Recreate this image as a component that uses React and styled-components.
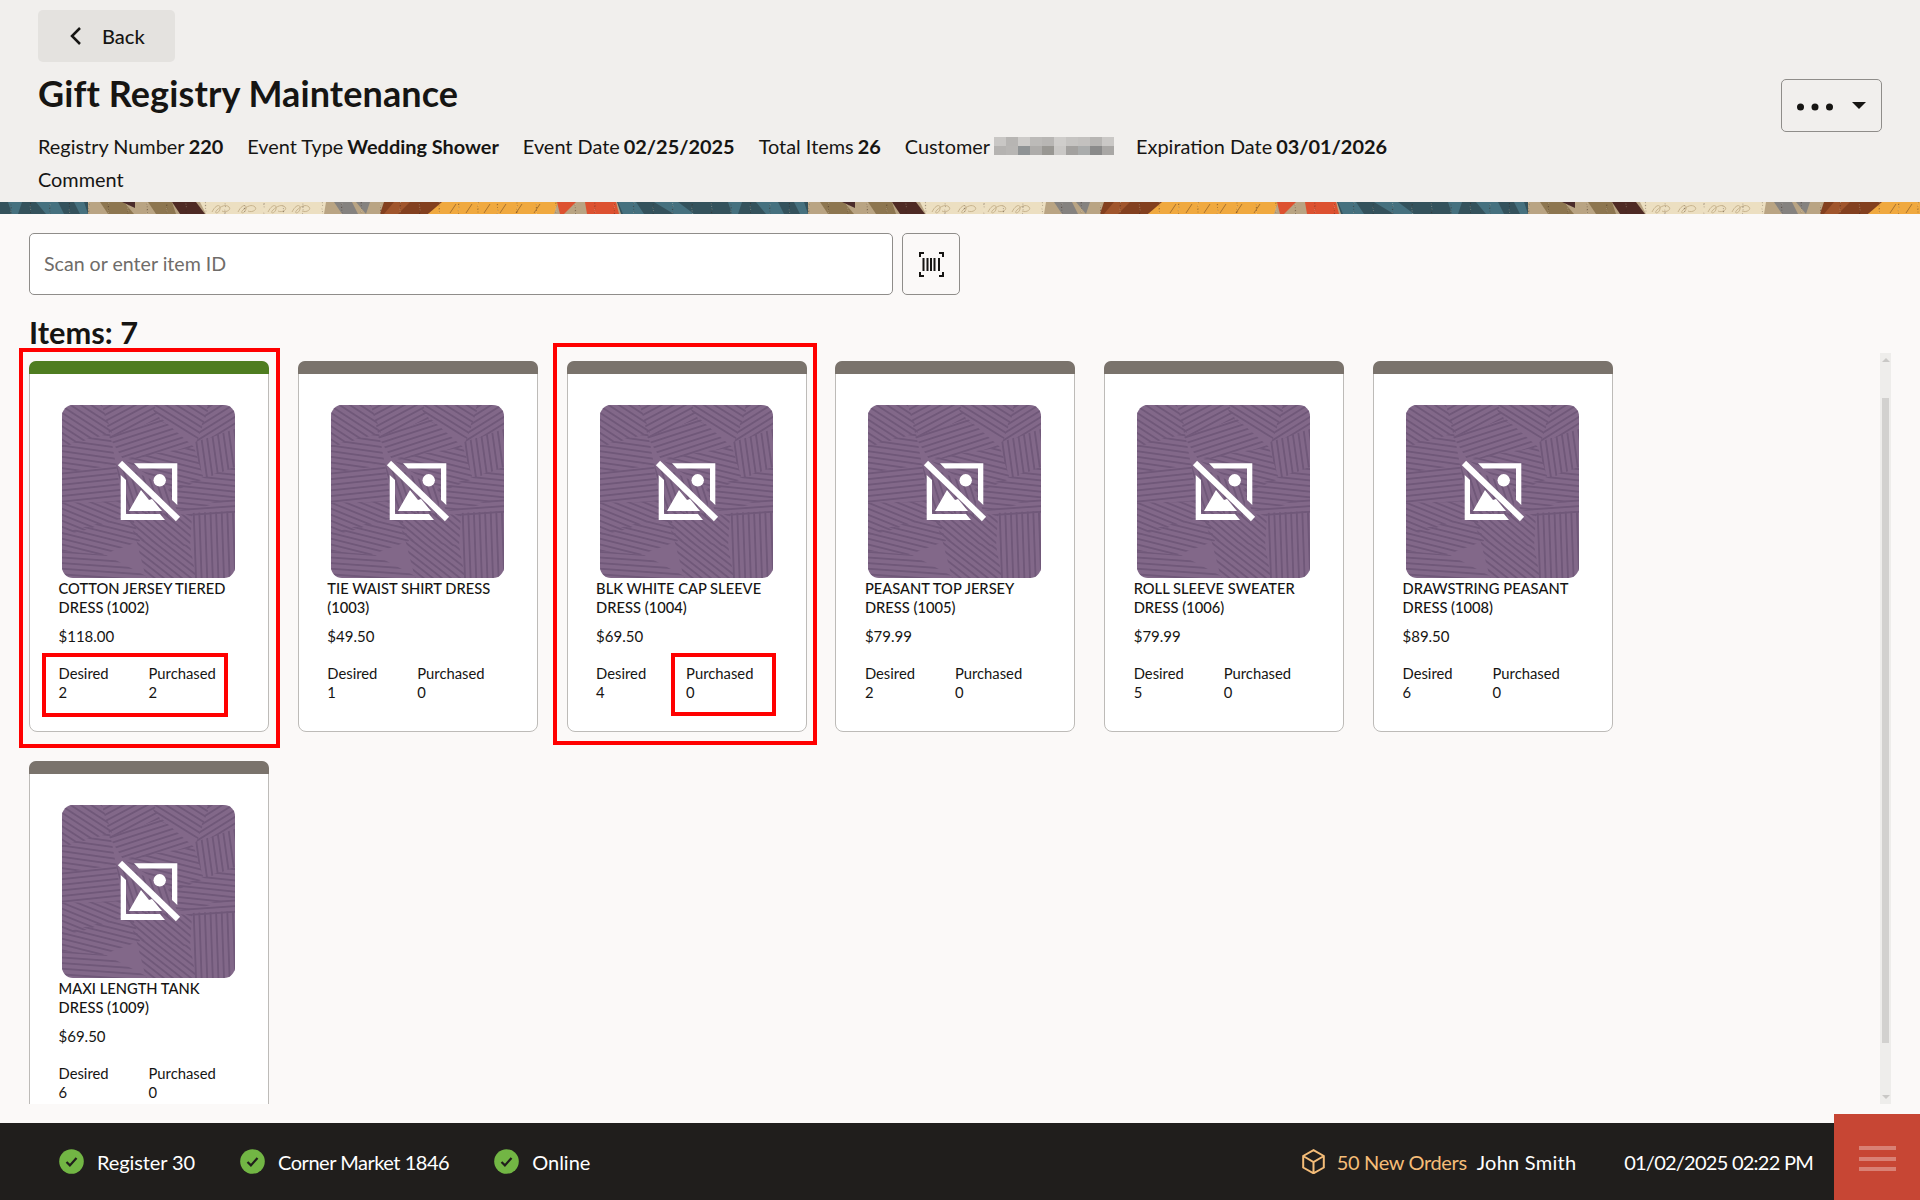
import React, { useId } from "react";
import styled, { createGlobalStyle } from "styled-components";

const Global = createGlobalStyle`
  html, body { margin: 0; padding: 0; height: 100%; overflow: hidden; }
  body { font-family: Lato, "Noto Sans", "Liberation Sans", sans-serif; color: #161513; background: #fbf9f8; }
  * { box-sizing: border-box; }
`;

const Page = styled.div`display:flex;flex-direction:column;height:1200px;width:1920px;overflow:hidden;position:relative;`;
const Header = styled.header`height:202px;background:#f1efed;display:flex;justify-content:space-between;padding:10px 38px 0;flex:none;`;
const HeaderLeft = styled.div`display:flex;flex-direction:column;align-items:flex-start;`;
const BackButton = styled.button`width:137px;height:52px;border:0;border-radius:5px;background:#e4e2df;display:flex;align-items:center;gap:19px;padding:0 0 0 31px;font:500 20px Lato,sans-serif;color:#161513;`;
const Title = styled.h1`margin:9px 0 0 0;font:700 36px/44px Lato,sans-serif;letter-spacing:.1px;color:#161513;`;
const MetaRow = styled.div`display:flex;align-items:center;gap:24px;margin:16.5px 0 0 0;font:400 19.9px/28px Lato,sans-serif;height:28px;`;
const MetaItem = styled.span`white-space:nowrap;display:flex;align-items:center;gap:4px;`;
const Comment = styled.div`font:400 19.9px/28px Lato,sans-serif;margin:5.5px 0 0 0;`;
const OverflowButton = styled.button`width:101px;height:53px;margin:69px 0 0;border:1.5px solid #8f8d8a;border-radius:5px;background:transparent;display:flex;align-items:center;justify-content:center;padding:0 0 0 2px;`;
const Band = styled.svg`display:block;width:100%;height:12px;flex:none;`;
const Main = styled.main`flex:1;min-height:0;display:flex;flex-direction:column;padding:19px 29px 19px;background:#fbf9f8;`;
const SearchRow = styled.div`display:flex;gap:9px;flex:none;`;
const SearchInput = styled.input`width:864px;height:62px;border:1.5px solid #8f8d8a;border-radius:5px;background:#fff;padding:0 14px 2px;font:400 19.6px Lato,sans-serif;color:#161513;&::placeholder{color:#6f6c69;opacity:1;}`;
const ScanButton = styled.button`width:58px;height:62px;border:1.5px solid #8f8d8a;border-radius:5px;background:transparent;display:flex;align-items:center;justify-content:center;padding:0;`;
const ItemsTitle = styled.h2`margin:21px 0 0;font:700 30.8px/34px Lato,sans-serif;height:37px;flex:none;`;
const Body = styled.div`flex:1;min-height:0;display:flex;`;
const Scroller = styled.div`flex:1;min-width:0;clip-path:inset(-20px 0 0 -20px);padding-top:8px;`;
const CardGrid = styled.div`display:grid;grid-template-columns:repeat(6,240px);column-gap:28.8px;row-gap:29px;`;
const Card = styled.article`position:relative;height:371px;background:#fff;border:1.5px solid #bdbbb8;border-radius:8px;display:flex;flex-direction:column;`;
const CardBar = styled.div`height:13px;margin:-1px -1px 0;border-radius:7px 7px 0 0;background:${p => (p.$done ? "#4f7d21" : "#7a736c")};flex:none;`;
const CardBody = styled.div`padding:31px 0 0 28.5px;display:flex;flex-direction:column;`;
const Thumb = styled.svg`display:block;width:173px;height:173px;margin-left:3.5px;border-radius:11px;flex:none;`;
const ItemName = styled.div`font:500 14.7px/19px Lato,sans-serif;color:#161513;margin-top:0.5px;width:178px;`;
const Price = styled.div`font:400 15px/19px Lato,sans-serif;margin-top:10px;`;
const Counts = styled.div`display:flex;margin-top:18.5px;font:400 14.8px/19px Lato,sans-serif;`;
const Count = styled.div`width:90px;`;
const Highlight = styled.div`position:absolute;border:4px solid #ff0000;pointer-events:none;left:${p => p.$l}px;top:${p => p.$t}px;width:${p => p.$w}px;height:${p => p.$h}px;`;
const ScrollTrack = styled.div`width:11px;background:#eeedeb;display:flex;flex-direction:column;align-items:center;justify-content:space-between;padding:5px 0;position:relative;flex:none;margin-left:auto;`;
const ScrollThumb = styled.div`position:absolute;left:2px;top:45px;width:7px;height:645px;background:#d2d1cf;`;
const Arrow = styled.div`width:0;height:0;border-left:4px solid transparent;border-right:4px solid transparent;${p => (p.$down ? "border-top:4px solid #c9c8c6;" : "border-bottom:4px solid #c9c8c6;")}`;
const Footer = styled.footer`height:77px;flex:none;background:#201e1c;color:#fff;display:flex;align-items:center;padding:0 107px 0 59px;font:400 20px Lato,sans-serif;position:relative;`;
const Status = styled.div`display:flex;align-items:center;gap:13px;margin-right:45px;white-space:nowrap;letter-spacing:${p => p.$ls || 0}px;`;
const FooterRight = styled.div`margin-left:auto;display:flex;align-items:center;white-space:nowrap;`;
const Orders = styled.span`color:#f5bd78;margin:0 10px 0 12px;letter-spacing:-.35px;`;
const User = styled.span`margin-right:47.8px;letter-spacing:.25px;`;
const Clock = styled.span`letter-spacing:-.75px;`;
const MenuButton = styled.button`position:absolute;right:0;bottom:0;width:86px;height:86px;border:0;background:#c74634;display:flex;flex-direction:column;align-items:center;justify-content:flex-start;gap:6.5px;padding:32px 0 0;`;
const MenuLine = styled.span`display:block;width:37px;height:4px;background:rgba(255,255,255,.32);`;
const MosaicSvg = styled.svg`display:block;margin-right:-2px;`;

const items = [
  { name: "COTTON JERSEY TIERED DRESS (1002)", price: "$118.00", d: 2, p: 2, done: true,
    hl: [{ l: -11, t: -14, w: 261, h: 400 }, { l: 12, t: 291, w: 186, h: 64 }] },
  { name: "TIE WAIST SHIRT DRESS (1003)", price: "$49.50", d: 1, p: 0 },
  { name: "BLK WHITE CAP SLEEVE DRESS (1004)", price: "$69.50", d: 4, p: 0,
    hl: [{ l: -15, t: -19, w: 264, h: 402 }, { l: 103, t: 291, w: 105, h: 63 }] },
  { name: "PEASANT TOP JERSEY DRESS (1005)", price: "$79.99", d: 2, p: 0 },
  { name: "ROLL SLEEVE SWEATER DRESS (1006)", price: "$79.99", d: 5, p: 0 },
  { name: "DRAWSTRING PEASANT DRESS (1008)", price: "$89.50", d: 6, p: 0 },
  { name: "MAXI LENGTH TANK DRESS (1009)", price: "$69.50", d: 6, p: 0 },
];

const patches = [
  ["0,0 40,0 50,28 0,42", 33], ["40,0 92,0 98,14 48,32", -28], ["88,0 148,0 136,34 98,16", 32],
  ["146,0 173,0 173,24 134,38", -32], ["0,40 48,28 54,60 0,68", 8], ["46,30 100,14 132,42 62,56", -18],
  ["130,38 173,24 173,62 142,74", 82], ["60,54 132,42 142,74 112,86", 14], ["0,66 54,58 60,96 0,100", -6],
  ["54,58 110,84 106,112 62,104", 72], ["106,84 142,72 173,62 173,94 116,108", 6],
  ["0,98 60,96 70,110 20,126 0,130", 22], ["116,106 173,92 173,108 130,112", -4],
  ["64,106 130,110 128,142 74,134", 40], ["128,108 173,106 173,173 132,173", 88],
  ["0,128 70,110 78,136 40,150 0,146", 14], ["74,134 128,140 134,173 84,173", 38],
  ["0,146 44,150 88,173 0,173", 4],
];

const ThumbPattern = () => {
  const id = useId().replace(/[^a-zA-Z0-9]/g, "");
  return (
    <Thumb viewBox="0 0 173 173" aria-hidden="true">
      <defs>
        {patches.map((p, i) => (
          <pattern key={i} id={`${id}h${i}`} width="5.6" height="5.6" patternUnits="userSpaceOnUse" patternTransform={`rotate(${p[1]})`}>
            <rect width="5.6" height="1.9" fill="#705879" />
          </pattern>
        ))}
      </defs>
      <rect width="173" height="173" fill="#826889" />
      {patches.map((p, i) => (
        <polygon key={i} points={p[0]} fill={`url(#${id}h${i})`} />
      ))}
      <g fill="#fff">
        <polygon points="72,58.3 115.3,58.3 115.3,100 110,95 110,63.5 77,63.5" />
        <polygon points="58.7,70 64,75 64,109 98,109 103,115 58.7,115" />
        <polygon points="67,106 79,85 87,95 90,94 100,106" />
        <circle cx="97.7" cy="75.3" r="6.2" />
      </g>
      <line x1="58" y1="58" x2="116" y2="114" stroke="#fff" strokeWidth="6" />
    </Thumb>
  );
};

const Scribble = ({ x }) => (
  <path d={`M${x} 10c4-8 9-8 8-3s-7 5-3 1 9-6 12-3-4 6-7 4`} fill="none" stroke="#c8b48e" strokeWidth="1" />
);

const speckles = Array.from({ length: 260 }, (_, i) => ({
  x: (i * 97.3) % 720,
  y: (i * 7.7) % 12,
  dark: i % 3 !== 0,
}));

const HeaderBand = () => {
  const id = useId().replace(/[^a-zA-Z0-9]/g, "");
  return (
    <Band aria-hidden="true">
      <defs>
        <pattern id={id} x="88" y="0" width="720" height="12" patternUnits="userSpaceOnUse">
          <rect width="720" height="12" fill="#b9a483" />
          <polygon points="12,0 36,0 46,12 20,12" fill="#8d7650" />
          <polygon points="34,0 47,0 47,6" fill="#4b2c2b" />
          <polygon points="60,0 84,0 88,12 68,12" fill="#8d7650" />
          <polygon points="84,0 108,0 117,12 92,12" fill="#4e2a24" />
          <polygon points="112,0 238,0 236,12 118,12" fill="#ecdfc1" />
          <Scribble x="124" /><Scribble x="150" /><Scribble x="180" /><Scribble x="204" />
          <polygon points="246,0 264,0 270,12 254,12" fill="#85827f" />
          <polygon points="268,0 282,0 278,12" fill="#85827f" />
          <polygon points="296,0 358,0 340,12 292,12" fill="#83401f" />
          <polygon points="306,0 322,0 310,12 296,12" fill="#a0552c" />
          <polygon points="354,0 470,0 466,12 340,12" fill="#f0a93f" />
          {[362, 378, 396, 412, 428, 446].map(x => (
            <line key={x} x1={x + 6} y1="2" x2={x} y2="11" stroke="#a9712d" strokeWidth="1" />
          ))}
          <polygon points="469,0 488,0 476,12 472,12" fill="#dd5130" />
          <polygon points="497,0 528,0 531,12 499,12" fill="#dd5130" />
          <polygon points="529,0 720,0 720,12 533,12" fill="#34525c" />
          <polygon points="530,0 548,0 556,12 535,12" fill="#46717f" />
          <polygon points="566,0 590,0 606,12 586,12" fill="#46717f" />
          <polygon points="640,0 654,0 650,12 644,12" fill="#46717f" />
          <polygon points="668,0 690,0 696,12 678,12" fill="#46717f" />
          <polygon points="706,0 716,0 720,12 712,12" fill="#46717f" />
          {speckles.map((s, i) => (
            <rect key={i} x={s.x} y={s.y} width="1" height="1" fill={s.dark ? "rgba(50,30,20,.35)" : "rgba(255,245,220,.3)"} />
          ))}
        </pattern>
      </defs>
      <rect width="100%" height="12" fill={`url(#${id})`} />
    </Band>
  );
};

const top = ["#c9c7c5", "#b7b5b3", "#cdcbc9", "#bcbab8", "#b8b6b4", "#cfcdcb", "#c6c4c2", "#c3c1bf", "#b7b5b3", "#cac8c6"];
const bottom = ["#b5b3b1", "#b8b6b4", "#8f9395", "#aeacaa", "#999793", "#cac8c6", "#a3a19f", "#aaacac", "#8a8a8a", "#a9a7a5"];
const Mosaic = () => (
  <MosaicSvg width="120" height="18" aria-hidden="true">
    {top.map((c, i) => <rect key={i} x={i * 12} y="0" width="12" height="9" fill={c} />)}
    {bottom.map((c, i) => <rect key={i} x={i * 12} y="9" width="12" height="9" fill={c} />)}
  </MosaicSvg>
);

const Check = () => (
  <svg width="25" height="25" viewBox="0 0 25 25" aria-hidden="true">
    <circle cx="12.5" cy="12.5" r="12.3" fill="#72b644" />
    <path d="M7.5 13l3.4 3.4 6.6-7.4" fill="none" stroke="#201e1c" strokeWidth="2.2" />
  </svg>
);

export default function App() {
  return (
    <Page>
      <Global />
      <Header>
        <HeaderLeft>
          <BackButton>
            <svg width="14" height="20" viewBox="0 0 14 20" aria-hidden="true">
              <path d="M11 2L3 10l8 8" fill="none" stroke="#161513" strokeWidth="2.5" />
            </svg>
            Back
          </BackButton>
          <Title>Gift Registry Maintenance</Title>
          <MetaRow>
            <MetaItem>Registry Number <b>220</b></MetaItem>
            <MetaItem>Event Type <b>Wedding Shower</b></MetaItem>
            <MetaItem>Event Date <b>02/25/2025</b></MetaItem>
            <MetaItem>Total Items <b>26</b></MetaItem>
            <MetaItem>Customer <Mosaic /></MetaItem>
            <MetaItem>Expiration Date <b>03/01/2026</b></MetaItem>
          </MetaRow>
          <Comment>Comment</Comment>
        </HeaderLeft>
        <OverflowButton aria-label="More">
          <svg width="72" height="14" viewBox="0 0 72 14" aria-hidden="true">
            <circle cx="3.5" cy="8" r="3.5" fill="#161513" />
            <circle cx="18" cy="8" r="3.5" fill="#161513" />
            <circle cx="32.5" cy="8" r="3.5" fill="#161513" />
            <polygon points="55,3 69,3 62,10" fill="#161513" />
          </svg>
        </OverflowButton>
      </Header>
      <HeaderBand />
      <Main>
        <SearchRow>
          <SearchInput placeholder="Scan or enter item ID" />
          <ScanButton aria-label="Scan">
            <svg width="25" height="25" viewBox="0 0 25 25" aria-hidden="true">
              <path d="M1 5V1h4M20 1h4v4M1 20v4h4M24 20v4h-4" fill="none" stroke="#161513" strokeWidth="2" />
              <path d="M4.5 6v13M8.5 6v13M12 6v13M15.5 6v13M20 6v13" stroke="#161513" strokeWidth="2" />
            </svg>
          </ScanButton>
        </SearchRow>
        <ItemsTitle>Items: 7</ItemsTitle>
        <Body>
          <Scroller>
            <CardGrid>
              {items.map(it => (
                <Card key={it.name}>
                  <CardBar $done={it.done} />
                  <CardBody>
                    <ThumbPattern />
                    <ItemName>{it.name}</ItemName>
                    <Price>{it.price}</Price>
                    <Counts>
                      <Count>Desired<br />{it.d}</Count>
                      <Count>Purchased<br />{it.p}</Count>
                    </Counts>
                  </CardBody>
                  {it.hl && it.hl.map((h, i) => <Highlight key={i} $l={h.l} $t={h.t} $w={h.w} $h={h.h} />)}
                </Card>
              ))}
            </CardGrid>
          </Scroller>
          <ScrollTrack>
            <Arrow />
            <ScrollThumb />
            <Arrow $down />
          </ScrollTrack>
        </Body>
      </Main>
      <Footer>
        <Status $ls={-0.1}><Check />Register 30</Status>
        <Status $ls={-0.48}><Check />Corner Market 1846</Status>
        <Status><Check />Online</Status>
        <FooterRight>
          <svg width="23" height="25" viewBox="0 0 23 25" aria-hidden="true">
            <path d="M11.5 1.2L21.8 7v11.5l-10.3 5.8L1.2 18.5V7zM1.2 7l10.3 6 10.3-6M11.5 13v11.3" fill="none" stroke="#f5bd78" strokeWidth="2" />
          </svg>
          <Orders>50 New Orders</Orders>
          <User>John Smith</User>
          <Clock>01/02/2025 02:22 PM</Clock>
        </FooterRight>
        <MenuButton aria-label="Menu"><MenuLine /><MenuLine /><MenuLine /></MenuButton>
      </Footer>
    </Page>
  );
}
